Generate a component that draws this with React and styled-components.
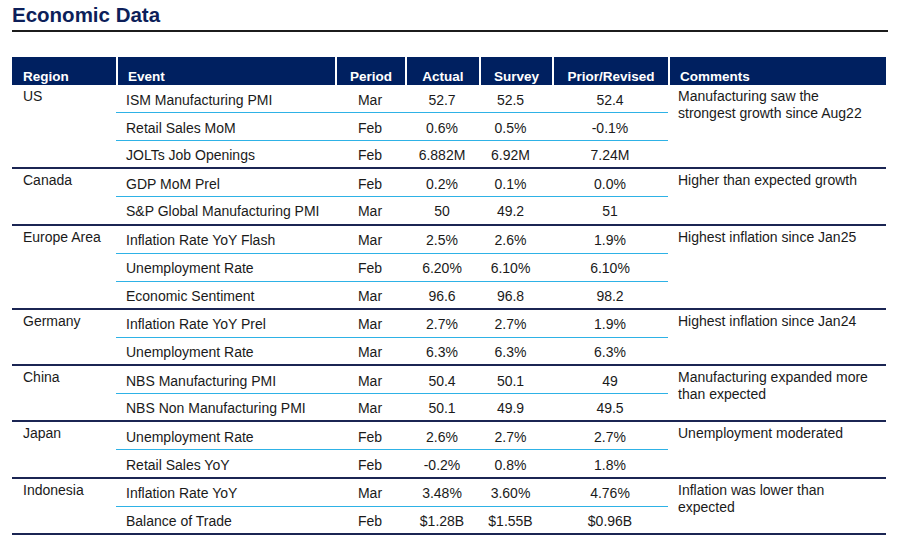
import React from "react";
import styled, { createGlobalStyle } from "styled-components";

const GlobalStyle = createGlobalStyle`
  html, body { margin: 0; padding: 0; background: #ffffff; }
  body { font-family: "Liberation Sans", Arial, sans-serif; color: #1a1a1a; }
`;

const COLS = "104px 219px 70px 74px 73px 116px 218px";
const NAVY = "#002060";
const LINE_NAVY = "#1b2553";
const LINE_BLUE = "#2eb2e6";

const Page = styled.div`
  width: 900px;
  height: 542px;
  padding: 2px 0 0 12px;
  box-sizing: border-box;
  overflow: hidden;
`;

const Title = styled.h1`
  margin: 0;
  width: 876px;
  font-size: 20.5px;
  line-height: 26px;
  font-weight: 700;
  color: #0d1f5a;
  padding-bottom: 2px;
  border-bottom: 2px solid #1c1c1c;
`;

const Table = styled.div`
  margin-top: 25px;
  width: 874px;
  display: flex;
  flex-direction: column;
`;

const HeaderRow = styled.div`
  display: grid;
  grid-template-columns: ${COLS};
  height: 28px;
  background: ${NAVY};
`;

const HeadCell = styled.div`
  display: flex;
  align-items: flex-end;
  justify-content: ${(p) => (p.$align === "left" ? "flex-start" : "center")};
  padding: 0 0 0 ${(p) => (p.$first ? "11px" : p.$align === "left" ? "10px" : "0")};
  box-sizing: border-box;
  color: #ffffff;
  font-weight: 700;
  font-size: 13.5px;
  line-height: 16px;
  border-left: ${(p) => (p.$first ? "none" : "2px solid #ffffff")};
`;

const Group = styled.div`
  display: grid;
  grid-template-columns: 104px 552px 218px;
  border-bottom: 2px solid ${LINE_NAVY};
  box-sizing: border-box;
`;

const RegionCell = styled.div`
  padding: 3px 0 0 11px;
  font-size: 14px;
  line-height: 17px;
`;

const Rows = styled.div`
  display: flex;
  flex-direction: column;
`;

const DataRow = styled.div`
  display: grid;
  grid-template-columns: 219px 70px 74px 73px 116px;
  height: 28px;
  padding-top: 2px;
  box-sizing: border-box;
  border-bottom: 1.5px solid ${LINE_BLUE};
  align-items: center;
  font-size: 14px;
  &:last-child {
    border-bottom: none;
    height: 26.3px;
  }
`;

const EventCell = styled.div`
  padding-left: 10px;
  white-space: nowrap;
`;

const ValueCell = styled.div`
  text-align: center;
  white-space: nowrap;
  padding-right: ${(p) => p.$shift || 0}px;
`;

const CommentCell = styled.div`
  padding: 3px 0 0 10px;
  font-size: 14px;
  line-height: 17px;
`;

const groups = [
  {
    region: "US",
    comment: ["Manufacturing saw the", "strongest growth since Aug22"],
    rows: [
      ["ISM Manufacturing PMI", "Mar", "52.7", "52.5", "52.4"],
      ["Retail Sales MoM", "Feb", "0.6%", "0.5%", "-0.1%"],
      ["JOLTs Job Openings", "Feb", "6.882M", "6.92M", "7.24M"],
    ],
  },
  {
    region: "Canada",
    comment: ["Higher than expected growth"],
    rows: [
      ["GDP MoM Prel", "Feb", "0.2%", "0.1%", "0.0%"],
      ["S&P Global Manufacturing PMI", "Mar", "50", "49.2", "51"],
    ],
  },
  {
    region: "Europe Area",
    comment: ["Highest inflation since Jan25"],
    rows: [
      ["Inflation Rate YoY Flash", "Mar", "2.5%", "2.6%", "1.9%"],
      ["Unemployment Rate", "Feb", "6.20%", "6.10%", "6.10%"],
      ["Economic Sentiment", "Mar", "96.6", "96.8", "98.2"],
    ],
  },
  {
    region: "Germany",
    comment: ["Highest inflation since Jan24"],
    rows: [
      ["Inflation Rate YoY Prel", "Mar", "2.7%", "2.7%", "1.9%"],
      ["Unemployment Rate", "Mar", "6.3%", "6.3%", "6.3%"],
    ],
  },
  {
    region: "China",
    comment: ["Manufacturing expanded more", "than expected"],
    rows: [
      ["NBS Manufacturing PMI", "Mar", "50.4", "50.1", "49"],
      ["NBS Non Manufacturing PMI", "Mar", "50.1", "49.9", "49.5"],
    ],
  },
  {
    region: "Japan",
    comment: ["Unemployment moderated"],
    rows: [
      ["Unemployment Rate", "Feb", "2.6%", "2.7%", "2.7%"],
      ["Retail Sales YoY", "Feb", "-0.2%", "0.8%", "1.8%"],
    ],
  },
  {
    region: "Indonesia",
    comment: ["Inflation was lower than", "expected"],
    rows: [
      ["Inflation Rate YoY", "Mar", "3.48%", "3.60%", "4.76%"],
      ["Balance of Trade", "Feb", "$1.28B", "$1.55B", "$0.96B"],
    ],
  },
];

const headers = [
  { label: "Region", align: "left", first: true },
  { label: "Event", align: "left" },
  { label: "Period" },
  { label: "Actual" },
  { label: "Survey" },
  { label: "Prior/Revised" },
  { label: "Comments", align: "left" },
];

export default function App() {
  return (
    <>
      <GlobalStyle />
      <Page>
        <Title>Economic Data</Title>
        <Table>
          <HeaderRow>
            {headers.map((h) => (
              <HeadCell key={h.label} $align={h.align} $first={h.first}>
                {h.label}
              </HeadCell>
            ))}
          </HeaderRow>
          {groups.map((g) => (
            <Group key={g.region}>
              <RegionCell>{g.region}</RegionCell>
              <Rows>
                {g.rows.map((r) => (
                  <DataRow key={r[0]}>
                    <EventCell>{r[0]}</EventCell>
                    <ValueCell>{r[1]}</ValueCell>
                    <ValueCell>{r[2]}</ValueCell>
                    <ValueCell $shift={10}>{r[3]}</ValueCell>
                    <ValueCell>{r[4]}</ValueCell>
                  </DataRow>
                ))}
              </Rows>
              <CommentCell>
                {g.comment.map((line, i) => (
                  <React.Fragment key={i}>
                    {i > 0 && <br />}
                    {line}
                  </React.Fragment>
                ))}
              </CommentCell>
            </Group>
          ))}
        </Table>
      </Page>
    </>
  );
}
